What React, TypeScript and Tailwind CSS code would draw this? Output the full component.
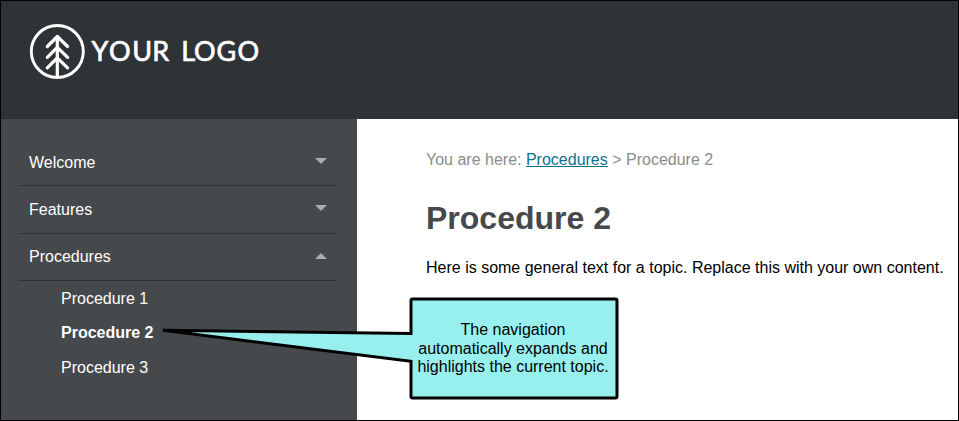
import React from "react";

function Logo() {
  return (
    <svg width="240" height="64" viewBox="0 0 240 64" fill="none" stroke="#fff" className="block">
      <circle cx="33.3" cy="32.5" r="26" strokeWidth="2.9" />
      <g strokeWidth="3.200" strokeLinecap="round" strokeLinejoin="round">
        <path d="M33.3 17.500V58" />
        <path d="M23.300 27.500L33.300 17.500L43.600 27.500M23.300 38.300L33.300 28.300L43.600 38.300M23.300 48.800L33.300 38.800L43.600 48.800" />
      </g>
      <text
        x="67.5 85 108.3 128.200 157.200 170 192.500 213.500"
        y="42.3"
        fill="#fff"
        strokeWidth="0.7"
        strokeLinejoin="round"
        className="font-['Lato',sans-serif] text-[27px] font-normal"
      >
        YOURLOGO
      </text>
    </svg>
  );
}

function Arrow({ up = false }: { up?: boolean }) {
  return (
    <svg width="12" height="6" viewBox="0 0 12 6" fill="#a6acb0">
      <path d={up ? "M0 6L6 0l6 6z" : "M0 0h12L6 6z"} />
    </svg>
  );
}

const menu = [
  { title: "Welcome", row: "h-[48px] pt-[13px]", arrow: "h-[20px]", open: false },
  { title: "Features", row: "h-[48px] pt-[12px]", arrow: "h-[20px]", open: false },
  { title: "Procedures", row: "h-[47px] pt-[11px]", arrow: "h-[22px]", open: true },
];

export default function App() {
  return (
    <div className="relative flex h-[421px] w-[959px] flex-col overflow-hidden border border-black bg-white font-['Liberation_Sans',Arial,sans-serif] text-base">
      <header className="h-[118px] shrink-0 bg-[#2f3336] pt-[18px] pl-[23px]">
        <Logo />
      </header>
      <div className="flex min-h-0 flex-1">
        <nav className="w-[356px] shrink-0 bg-[#46494c] pt-[19px] pr-5 pl-[17px] text-white">
          {menu.map((item) => (
            <div
              key={item.title}
              className={`flex items-start justify-between border-b border-[#2f3336] pr-[10px] pl-[11px] ${item.row}`}
            >
              <span className="leading-6">{item.title}</span>
              <span className={`flex items-center ${item.arrow}`}>
                <Arrow up={item.open} />
              </span>
            </div>
          ))}
          <ul className="flex flex-col pt-[6px] pl-[43px] leading-6">
            <li className="h-[34px]">Procedure 1</li>
            <li className="h-[35px] font-bold">Procedure 2</li>
            <li>Procedure 3</li>
          </ul>
        </nav>
        <main className="flex-1 pt-[29px] pl-[69px]">
          <p className="leading-6 whitespace-nowrap text-[#8c8c8c]">
            You are here: <a className="text-[#107092] underline">Procedures</a> &gt; Procedure 2
          </p>
          <h1 className="pt-[26px] text-[32px] leading-[40px] font-bold text-[#46494c]">Procedure 2</h1>
          <p className="pt-[18px] leading-6 whitespace-nowrap text-black">
            Here is some general text for a topic. Replace this with your own content.
          </p>
        </main>
      </div>
      <div className="absolute top-[295px] left-[160px] h-[104px] w-[460px]">
        <svg width="460" height="104" viewBox="0 0 460 104" className="absolute inset-0">
          <path
            d="M251.500 3H454.500Q456 3 456 4.500V100.500Q456 102 454.500 102H251.500Q250 102 250 100.500V65.300L2 34.300L250 37.500V4.500Q250 3 251.500 3Z"
            fill="#97f0ed"
            stroke="#000"
            strokeWidth="3"
            strokeLinejoin="miter"
            strokeMiterlimit="2"
          />
        </svg>
        <div className="relative ml-[248px] flex h-full w-[208px] flex-col items-center pt-[25px] leading-[18.500px] whitespace-nowrap text-black">
          <span>The navigation</span>
          <span>automatically expands and</span>
          <span>highlights the current topic.</span>
        </div>
      </div>
    </div>
  );
}
